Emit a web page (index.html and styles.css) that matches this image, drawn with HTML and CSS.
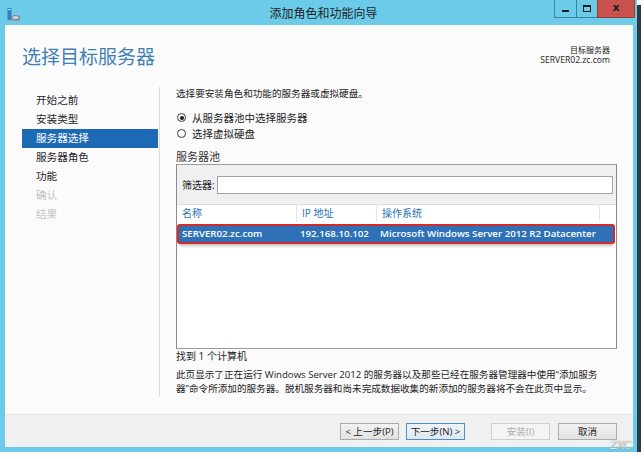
FILE: index.html
```html
<!DOCTYPE html>
<html lang="zh-CN">
<head>
    <meta charset="UTF-8">
    <meta name="viewport" content="width=device-width, initial-scale=1.0">
    <title>添加角色和功能向导</title>
    <link rel="stylesheet" href="styles.css">
</head>
<body>
    <div class="window">
        <div class="titlebar">
            <div class="app-icon">
                <svg width="14" height="14" viewBox="0 0 14 14">
                    <rect x="0.5" y="0" width="4" height="12" fill="#2f7fc8"/>
                    <rect x="1.2" y="1" width="2.6" height="1.2" fill="#bfe3fa"/>
                    <path d="M4 13 V9.5 Q4 7 6.5 7 H10.5 Q13 7 13 9.5 V13 Z" fill="#8c96a0"/>
                    <path d="M6 9.5 Q6 8.5 7 8.5 H10 Q11 8.5 11 9.5 V10.5 H6 Z" fill="#dfe6ec"/>
                </svg>
            </div>
            <div class="title">添加角色和功能向导</div>
            <div class="controls">
                <span class="ctl ctl-min"><i></i></span>
                <span class="ctl ctl-max"><i></i></span>
                <span class="ctl ctl-close">x</span>
            </div>
        </div>

        <div class="client">
            <div class="head">
                <h1>选择目标服务器</h1>
                <div class="target">
                    <div>目标服务器</div>
                    <div class="target-name">SERVER02.zc.com</div>
                </div>
            </div>

            <div class="main">
                <ul class="steps">
                    <li>开始之前</li>
                    <li>安装类型</li>
                    <li class="active">服务器选择</li>
                    <li>服务器角色</li>
                    <li>功能</li>
                    <li class="off">确认</li>
                    <li class="off">结果</li>
                </ul>

                <div class="content">
                    <p class="intro">选择要安装角色和功能的服务器或虚拟硬盘。</p>
                    <div class="radio-row"><span class="radio checked"></span>从服务器池中选择服务器</div>
                    <div class="radio-row"><span class="radio"></span>选择虚拟硬盘</div>
                    <div class="pool-title">服务器池</div>

                    <div class="pool">
                        <div class="filter">
                            <span>筛选器:</span>
                            <div class="filter-input"></div>
                        </div>
                        <div class="cols">
                            <span>名称</span>
                            <span>IP 地址</span>
                            <span>操作系统</span>
                            <span></span>
                        </div>
                        <div class="server-row">
                            <span>SERVER02.zc.com</span>
                            <span>192.168.10.102</span>
                            <span>Microsoft Windows Server 2012 R2 Datacenter</span>
                        </div>
                    </div>

                    <p class="found">找到 1 个计算机</p>
                    <p class="desc">此页显示了正在运行 Windows Server 2012 的服务器以及那些已经在服务器管理器中使用“添加服务<br>器”命令所添加的服务器。脱机服务器和尚未完成数据收集的新添加的服务器将不会在此页中显示。</p>
                </div>
            </div>

            <div class="footer">
                <button class="btn">&lt; 上一步(P)</button>
                <button class="btn btn-default">下一步(N) &gt;</button>
                <button class="btn btn-install" disabled>安装(I)</button>
                <button class="btn">取消</button>
            </div>
        </div>

        <div class="watermark">ZXC</div>
    </div>
</body>
</html>
```

FILE: styles.css
```css
*
{
    box-sizing: border-box;
    margin: 0;
    padding: 0;
}
body
{
    background: #ffffff;
    font-family: "Open Sans", "Noto Sans CJK SC", sans-serif;
    color: #222;
}
.window
{
    position: relative;
    width: 637px;
    height: 452px;
    background: #6bcbe9;
    box-shadow: 4px 5px 0 #2e3b42;
    display: flex;
    flex-direction: column;
}

/* title bar */
.titlebar
{
    height: 25px;
    display: grid;
    grid-template-columns: 1fr auto 1fr;
    align-items: start;
}
.app-icon
{
    padding: 5px 0 0 7px;
}
.title
{
    padding: 6px 0 0 10px;
    font-size: 12px;
    line-height: 15px;
    color: #1e1e1e;
}
.controls
{
    display: flex;
    justify-content: flex-end;
    margin-right: 2px;
}
.ctl
{
    height: 18px;
    display: flex;
    justify-content: center;
    align-items: center;
    border: 1px solid #3d7f9e;
    border-top: none;
}
.ctl-min
{
    width: 22px;
    border-right: none;
}
.ctl-min i
{
    width: 7px;
    height: 2px;
    margin-top: 5px;
    background: #1a1a1a;
}
.ctl-max
{
    width: 21px;
    border-right: none;
}
.ctl-max i
{
    width: 8px;
    height: 7px;
    border: 1px solid #1a1a1a;
    border-top-width: 2px;
}
.ctl-close
{
    width: 38px;
    background: #c8524e;
    border-color: #9a3b38;
    font-family: "DejaVu Sans", sans-serif;
    font-weight: bold;
    font-size: 11px;
    color: #1c1c1c;
    padding-bottom: 2px;
}

/* client area */
.client
{
    flex: 1;
    margin: 0 4px 5px 5px;
    background: #fbfbfb;
    display: flex;
    flex-direction: column;
}
.head
{
    height: 62px;
    display: flex;
    justify-content: space-between;
    align-items: flex-start;
    padding: 19px 23px 0 17px;
}
.head h1
{
    margin-top: 2px;
    font-weight: normal;
    font-size: 19px;
    line-height: 22px;
    color: #3f7fb4;
}
.target
{
    text-align: right;
    font-size: 8px;
    line-height: 11px;
    color: #222;
}
.target-name
{
    font-size: 8.6px;
}

.main
{
    flex: 1;
    display: flex;
}
.steps
{
    list-style: none;
    width: 155px;
    margin-bottom: 17px;
    padding-top: 4px;
    border-right: 1px solid #d9d9d9;
}
.steps li
{
    height: 19px;
    line-height: 19px;
    margin: 0 1px 0 17px;
    padding-left: 14px;
    font-size: 10.6px;
    color: #262626;
}
.steps li.active
{
    background: #1d6ab4;
    color: #fff;
}
.steps li.off
{
    color: #c4c4c4;
}

.content
{
    flex: 1;
    padding: 0 16px;
    font-size: 10px;
}
.intro
{
    line-height: 14px;
    font-size: 9.6px;
}
.radio-row
{
    display: flex;
    align-items: center;
    height: 15.6px;
    font-size: 10.5px;
}
.intro + .radio-row
{
    margin-top: 9px;
}
.radio
{
    width: 9px;
    height: 9px;
    margin: 0 6px 0 1px;
    border: 1px solid #3a3a3a;
    border-radius: 50%;
    background: #fff;
    display: flex;
    justify-content: center;
    align-items: center;
}
.radio.checked::after
{
    content: "";
    width: 4px;
    height: 4px;
    border-radius: 50%;
    background: #1a1a1a;
}
.pool-title
{
    margin-top: 9px;
    font-size: 11px;
    line-height: 14px;
    color: #333;
}

.pool
{
    height: 185px;
    border: 1px solid #9c9c9c;
    border-left-color: #8a8a8a;
    border-right-color: #8a8a8a;
    background: #fff;
}
.filter
{
    height: 40px;
    display: flex;
    align-items: center;
    padding: 0 3px 0 5px;
    background: #f0f0f0;
    border-bottom: 1px solid #dcdcdc;
}
.filter span
{
    width: 35px;
    font-size: 10px;
}
.filter-input
{
    flex: 1;
    height: 18px;
    border: 1px solid #a3a3a3;
    background: #fff;
}
.cols, .server-row
{
    display: grid;
    grid-template-columns: 120px 80px 223px 1fr;
}
.cols
{
    height: 17px;
    line-height: 17px;
    color: #2c6fb2;
    font-size: 10px;
}
.cols span
{
    padding-left: 5px;
    border-right: 1px solid #e4e4e4;
}
.cols span:last-child
{
    border-right: none;
}
.server-row
{
    grid-template-columns: 118px 80px 223px;
    height: 16px;
    line-height: 16px;
    margin: 4px 3px 0 2px;
    background: #2f71b7;
    color: #fff;
    font-size: 9.7px;
    font-weight: 600;
    box-shadow: 0 0 0 2px #d52a2a, 0 4px 3px rgba(0, 0, 0, 0.25);
    border-radius: 1px;
}
.server-row span
{
    padding-left: 3px;
    white-space: nowrap;
}

.found
{
    line-height: 13px;
    margin-top: 1px;
}
.desc
{
    margin-top: 5px;
    line-height: 14px;
    font-size: 9.6px;
    white-space: nowrap;
}

/* buttons */
.footer
{
    height: 33px;
    display: flex;
    justify-content: flex-end;
    align-items: center;
    padding-right: 16px;
    background: #f0f0f0;
    border-top: 1px solid #e3e3e3;
}
.btn
{
    width: 59px;
    height: 17px;
    margin-left: 8px;
    font-family: "Open Sans", "Noto Sans CJK SC", sans-serif;
    font-size: 9.6px;
    color: #222;
    background: linear-gradient(#f2f2f2, #e2e2e2);
    border: 1px solid #acacac;
}
.btn-default
{
    margin-left: 7px;
    border-color: #4b8fc7;
    background: linear-gradient(#eef4fa, #dfe9f3);
}
.btn-install
{
    margin-left: 26px;
    color: #a8a8a8;
    background: #f4f4f4;
    border-color: #d0d0d0;
}

.watermark
{
    position: absolute;
    right: 6px;
    bottom: 0;
    font-family: "DejaVu Sans", sans-serif;
    font-size: 11px;
    font-style: italic;
    letter-spacing: -0.5px;
    color: #e6e6e6;
    text-shadow: 0 0 1px #555;
}
```
